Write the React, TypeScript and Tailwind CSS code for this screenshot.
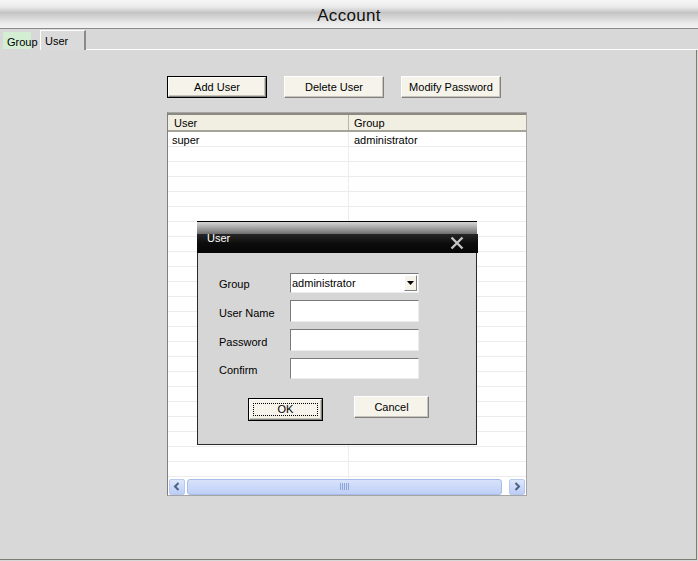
import React from "react";

const font = "font-['Liberation_Sans','Arial',sans-serif]";

function XPButton({ label, outlined, dotted, className }: { label: string; outlined?: boolean; dotted?: boolean; className?: string }) {
  return (
    <div className={`${className ?? ""} ${outlined ? "border border-black" : ""} box-border`}>
      <div className="w-full h-full box-border border border-t-white border-l-white border-r-[#808080] border-b-[#808080] bg-[#f5f3ea] flex items-center justify-center shadow-[inset_-1px_-1px_0_#c8c4b8]">
        {dotted ? (
          <div className="w-[calc(100%-6px)] h-[calc(100%-6px)] border border-dotted border-black flex items-center justify-center">
            {label}
          </div>
        ) : (
          label
        )}
      </div>
    </div>
  );
}

function Field({ className }: { className?: string }) {
  return (
    <div className={`box-border border border-t-[#7a7a7a] border-l-[#7a7a7a] border-r-[#ececec] border-b-[#ececec] bg-white ${className ?? ""}`} />
  );
}

export default function App() {
  const rows = Array.from({ length: 25 });
  return (
    <div className={`w-[698px] h-[561px] relative overflow-hidden bg-[#d8d8d8] text-[11px] text-black leading-none ${font}`}>
      {/* Title bar */}
      <div className="h-[29px] border-b border-[#8a8a8a] bg-[linear-gradient(to_bottom,#f6f6f6_0%,#eaeaea_25%,#c4c4c4_45%,#d4d4d4_60%,#ececec_85%,#f2f2f2_100%)] flex items-center justify-center">
        <span className="text-[17px] text-[#111] tracking-[0.3px] pt-[2px]">Account</span>
      </div>

      {/* Tabs */}
      <div className="h-[21px] flex items-end relative">
        <div className="ml-[3px] mb-[1px] h-[17px] w-[28px] bg-[#d4eed4] relative">
          <span className="absolute left-[4px] top-[5px] whitespace-nowrap">Group</span>
        </div>
        <div className="ml-[9px] h-[20px] w-[46px] box-border border-t border-l border-white border-r-[2px] border-r-[#8a8a8a] bg-[#dadada] pl-[4px] pt-[5px]">
          User
        </div>
        <div className="flex-1 h-[1px] bg-white self-end" />
      </div>

      {/* Panel */}
      <div className="absolute left-0 top-[50px] right-[1px] bottom-[1px] border-r border-b border-[#7c7c70]">
        <div className="pl-[167px] pt-[26px] flex gap-[17px]">
          <XPButton label="Add User" outlined className="w-[100px] h-[22px]" />
          <XPButton label="Delete User" className="w-[100px] h-[22px]" />
          <XPButton label="Modify Password" className="w-[100px] h-[22px]" />
        </div>

        {/* Table */}
        <div className="ml-[167px] mt-[14px] w-[360px] h-[384px] box-border border border-[#a5a5a5] border-l-[#808080] bg-white flex flex-col relative overflow-hidden">
          <div className="h-[19px] flex bg-[#f1efe2] border-y-[2px] border-t-[#8c8a80] border-b-[#a6a498] shrink-0">
            <div className="w-[181px] border-r border-[#b8b6aa] pl-[6px] flex items-center pt-[1px]">User</div>
            <div className="flex-1 pl-[5px] flex items-center pt-[1px]">Group</div>
          </div>
          <div className="flex-1 overflow-hidden">
            {rows.map((_, i) => (
              <div key={i} className="h-[14px] flex border-b border-[#ececec] box-content">
                <div className="w-[181px] border-r border-[#ececec] pl-[4px] flex items-center pt-[2px]">{i === 0 ? "super" : ""}</div>
                <div className="flex-1 pl-[5px] flex items-center pt-[2px]">{i === 0 ? "administrator" : ""}</div>
              </div>
            ))}
          </div>
          {/* Horizontal scrollbar */}
          <div className="h-[17px] shrink-0 bg-white flex items-center gap-[2px] px-[1px] absolute left-0 right-0 bottom-0">
            <div className="w-[16px] h-[16px] rounded-[2px] border border-[#b8c8f0] bg-[linear-gradient(to_bottom,#dde6fc,#bccdf5)] flex items-center justify-center">
              <svg width="8" height="9" viewBox="0 0 8 9"><path d="M5.5 1 L2 4.5 L5.5 8" stroke="#4d6185" strokeWidth="2" fill="none" /></svg>
            </div>
            <div className="flex-1 h-[16px] rounded-[3px] border border-[#a8bce8] bg-[linear-gradient(to_bottom,#d8e2fb,#bfcff6)] flex items-center justify-center">
              <svg width="9" height="7" viewBox="0 0 9 7">
                <path d="M0.5 0 V7 M2.5 0 V7 M4.5 0 V7 M6.5 0 V7 M8.5 0 V7" stroke="#8ea4d8" strokeWidth="1" />
              </svg>
            </div>
            <div className="w-[3px]" />
            <div className="w-[16px] h-[16px] rounded-[2px] border border-[#b8c8f0] bg-[linear-gradient(to_bottom,#dde6fc,#bccdf5)] flex items-center justify-center">
              <svg width="8" height="9" viewBox="0 0 8 9"><path d="M2.5 1 L6 4.5 L2.5 8" stroke="#4d6185" strokeWidth="2" fill="none" /></svg>
            </div>
          </div>
        </div>
      </div>

      {/* Dialog */}
      <div className="absolute left-[197px] top-[221px] w-[281px] h-[224px] flex flex-col">
        <div className="h-[13px] mr-[1px] border-t border-black bg-[linear-gradient(to_bottom,#d6d6d6,#9a9a9a_60%,#6e6e6e)]" />
        <div className="h-[19px] bg-[linear-gradient(to_bottom,#262626,#0c0c0c_50%,#050505)] relative">
          <span className="absolute left-[10px] top-[-1px] text-white text-[11px]">User</span>
          <svg className="absolute left-[253px] top-[2px]" width="14" height="14" viewBox="0 0 14 14">
            <path d="M1.5 1.5 L12.5 12.5 M12.5 1.5 L1.5 12.5" stroke="#c4c4c4" strokeWidth="2.4" />
          </svg>
        </div>
        <div className="flex-1 mr-[1px] box-border border-x border-b border-[#2a2a2a] bg-[#d6d6d6] relative">
          <div className="absolute left-[21px] top-[26px]">Group</div>
          <div className="absolute left-[21px] top-[55px]">User Name</div>
          <div className="absolute left-[21px] top-[84px]">Password</div>
          <div className="absolute left-[21px] top-[112px]">Confirm</div>

          <div className="absolute left-[92px] top-[20px] w-[129px] h-[20px] box-border border border-t-[#7a7a7a] border-l-[#7a7a7a] border-r-[#ececec] border-b-[#ececec] bg-white flex items-center">
            <span className="pl-[1px] flex-1">administrator</span>
            <div className="w-[13px] h-[16px] mr-[1px] box-border border border-t-white border-l-white border-r-[#808080] border-b-[#808080] bg-[#f5f3ea] flex items-center justify-center">
              <svg width="7" height="4" viewBox="0 0 7 4"><path d="M0 0 H7 L3.5 4 Z" fill="#000" /></svg>
            </div>
          </div>
          <Field className="absolute left-[92px] top-[47px] w-[129px] h-[22px]" />
          <Field className="absolute left-[92px] top-[76px] w-[129px] h-[22px]" />
          <Field className="absolute left-[92px] top-[105px] w-[129px] h-[21px]" />

          <XPButton label="OK" outlined dotted className="absolute left-[50px] top-[145px] w-[75px] h-[23px]" />
          <XPButton label="Cancel" className="absolute left-[156px] top-[143px] w-[75px] h-[22px]" />
        </div>
      </div>
    </div>
  );
}
